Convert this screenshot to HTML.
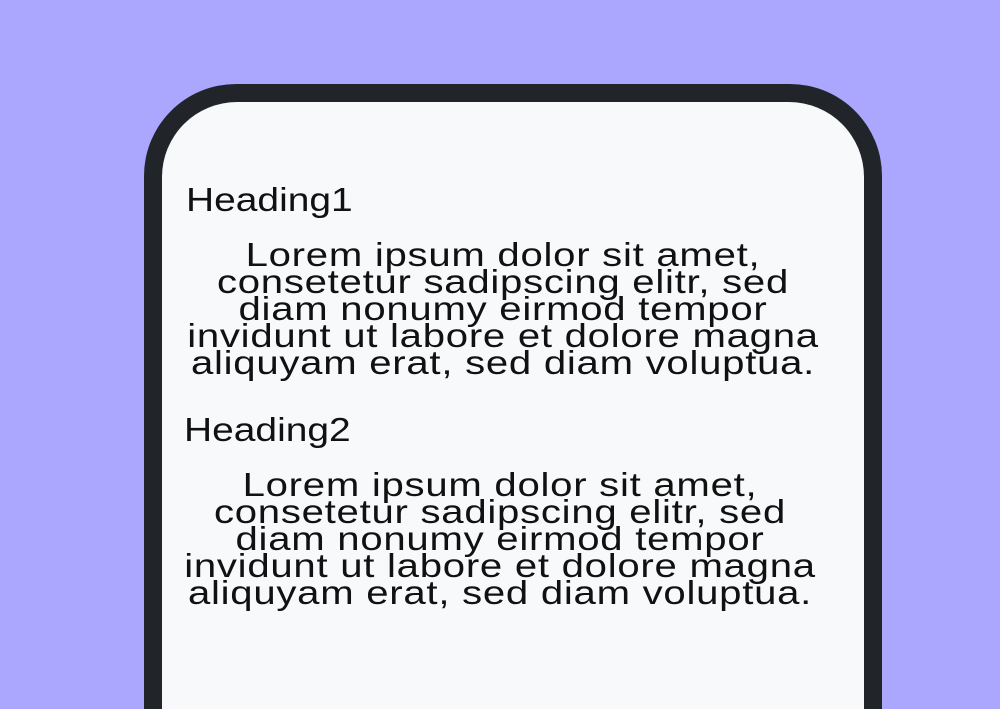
<!DOCTYPE html>
<html><head><meta charset="utf-8"><style>
html,body{margin:0;padding:0;width:1000px;height:709px;overflow:hidden}
body{background:#aba7ff;position:relative;font-family:"Liberation Sans",sans-serif;color:#111}
.frame{position:absolute;left:144px;top:84px;width:738px;height:625px;background:#212529;border-radius:92px 92px 0 0}
.screen{position:absolute;left:162px;top:102px;width:702px;height:607px;background:#f8f9fa;border-radius:75px 75px 0 0}
.t{position:absolute;font-size:33px;line-height:27px;white-space:nowrap}
.h{transform:scaleX(1.18);transform-origin:0 0}
.p{text-align:center;width:702px;left:152px;letter-spacing:0.6px;transform:scaleX(1.216);transform-origin:50% 0}
</style></head><body>
<div class="frame"></div>
<div class="screen"></div>
<div class="t h" style="left:186px;top:186px">Heading1</div>
<div class="t p" style="top:241px">Lorem ipsum dolor sit amet,<br>consetetur sadipscing elitr, sed<br>diam nonumy eirmod tempor<br>invidunt ut labore et dolore magna<br>aliquyam erat, sed diam voluptua.</div>
<div class="t h" style="left:184px;top:416px">Heading2</div>
<div class="t p" style="top:471px;left:149px">Lorem ipsum dolor sit amet,<br>consetetur sadipscing elitr, sed<br>diam nonumy eirmod tempor<br>invidunt ut labore et dolore magna<br>aliquyam erat, sed diam voluptua.</div>
</body></html>
